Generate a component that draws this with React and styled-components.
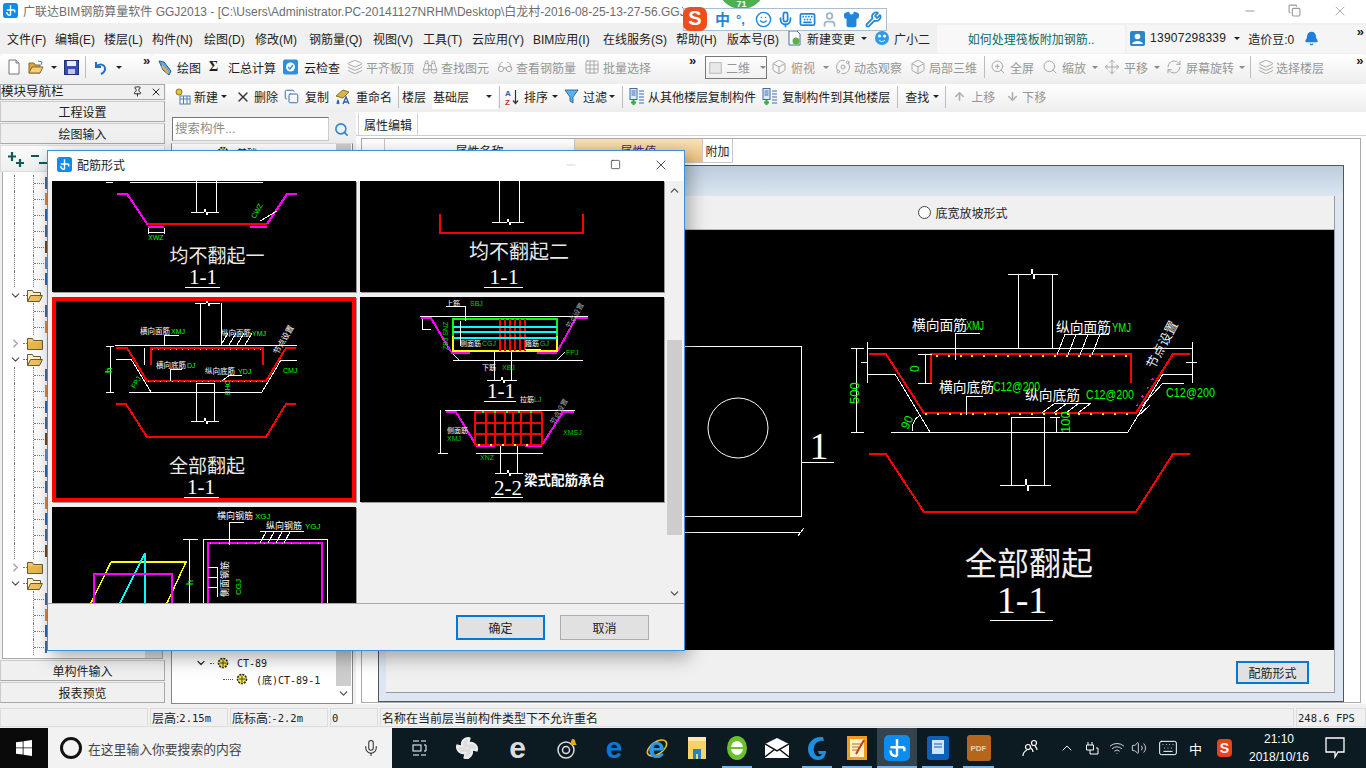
import styled, { createGlobalStyle } from 'styled-components'
import {
  ArrowDown, ArrowUp, Binoculars, Bell, Box, ChevronDown, ChevronUp, ChevronRight,
  Fan, Glasses, Grid3x3, Keyboard, Layers, Mic, Minus, Move, Orbit, Pin, RefreshCw, Search,
  Shirt, Smile, Square, User, Volume2, Wifi, Wrench, X, ZoomIn, Copy,
} from 'lucide-react'

const SANS = '"Liberation Sans", "Noto Sans CJK SC", sans-serif'
const SERIF = '"Liberation Serif", "Noto Sans CJK SC", serif'

const Global = createGlobalStyle`
  html, body { margin: 0; padding: 0; overflow: hidden; }
  body { font: 12px ${SANS}; color: #222; }
  * { box-sizing: border-box; }
`

/* ---------- small drawn icons ---------- */

const Logo = ({ size = 15 }) => (
  <svg width={size} height={size} viewBox="0 0 16 16">
    <rect width="16" height="16" rx="3" fill="#0a8cf0" />
    <path d="M8 2.500V13M4 7.500H12.500M8 13c-3 0-4-1.500-4-3.500M12.500 7.500v2.500" stroke="#fff" strokeWidth="1.500" fill="none" />
  </svg>
)
const Doc = () => (
  <svg width="14" height="16" viewBox="0 0 14 16">
    <path d="M2 1h7l3 3v11H2z" fill="#fff" stroke="#777" />
    <path d="M9 1v3h3" fill="#ddd" stroke="#777" />
  </svg>
)
const OpenFolder = () => (
  <svg width="16" height="15" viewBox="0 0 16 15">
    <path d="M1 3h5l1 2h5v8H1z" fill="#d9a441" stroke="#8a6a24" />
    <path d="M1 13l3-6h11l-3 6z" fill="#f4cf7c" stroke="#8a6a24" />
    <path d="M10 1l4 1-1 3" stroke="#3a7fc4" fill="none" />
  </svg>
)
const Floppy = () => (
  <svg width="15" height="15" viewBox="0 0 15 15">
    <rect x=".5" y=".5" width="14" height="14" fill="#3350b0" stroke="#1f2f70" />
    <rect x="3" y="1" width="9" height="5" fill="#e8eefb" />
    <rect x="4" y="9" width="7" height="5" fill="#c7c7d9" />
  </svg>
)
const Undo = () => (
  <svg width="14" height="15" viewBox="0 0 14 15">
    <path d="M3 2v5h5M3 7c3-4 9-3 9 2 0 2-2 4-4 5" stroke="#1f6fc4" strokeWidth="2" fill="none" />
  </svg>
)
const DrawIco = () => (
  <svg width="17" height="17" viewBox="0 0 17 17">
    <path d="M2 2l5 1 7 9-2 4-6-5z" fill="#6fa8dc" stroke="#27568c" />
    <path d="M5 7l6 7" stroke="#e8b23a" strokeWidth="2" />
  </svg>
)
const CloudCheck = () => (
  <svg width="15" height="16" viewBox="0 0 15 16">
    <rect y=".5" width="15" height="15" rx="2" fill="#2b8fdc" />
    <circle cx="7.500" cy="8" r="4.500" fill="#fff" />
    <path d="M5 8l2 2 3-4" stroke="#2b8fdc" strokeWidth="1.300" fill="none" />
  </svg>
)
const Sigma = () => <SigmaGlyph>Σ</SigmaGlyph>
const NewPart = () => (
  <svg width="17" height="17" viewBox="0 0 17 17">
    <circle cx="5" cy="4" r="3" fill="#e8c33a" stroke="#8a7420" />
    <rect x="6" y="8" width="10" height="8" fill="#fff" stroke="#4a7ab0" />
    <path d="M6 11h10M9.500 8v8M13 8v8" stroke="#4a7ab0" />
  </svg>
)
const CopyIco = () => <Copy size={15} color="#3c6ea8" strokeWidth={1.600} />
const Rename = () => (
  <svg width="18" height="17" viewBox="0 0 18 17">
    <path d="M1 8l7-6 6 2-6 6z" fill="#d9b44a" stroke="#8a7420" />
    <path d="M2 16l1-4 1 4M8 16l3-7 3 7M9 14h4" stroke="#2a5ea8" strokeWidth="1.300" fill="none" />
  </svg>
)
const Sort = () => (
  <svg width="16" height="18" viewBox="0 0 16 18">
    <text x="1" y="8" fontSize="8" fontWeight="700" fill="#2a5ea8">A</text>
    <text x="1" y="17" fontSize="8" fontWeight="700" fill="#b5392f">Z</text>
    <path d="M11.500 2v13M9 12.500l2.500 3 2.500-3" stroke="#333" strokeWidth="1.200" fill="none" />
  </svg>
)
const Funnel = () => (
  <svg width="15" height="15" viewBox="0 0 15 15">
    <path d="M1 1h13L9 8v6l-3-2V8z" fill="#5db1e8" stroke="#2a6ea8" />
  </svg>
)
const CopyIn = () => (
  <svg width="16" height="18" viewBox="0 0 16 18">
    <rect x="1" y=".5" width="7" height="11" fill="#dfe9f7" stroke="#3a6ea8" />
    <path d="M2.500 3h4M2.500 5h4M2.500 7h4" stroke="#3a6ea8" />
    <path d="M10 3h5M10 6h5M10 9h5M10 12h5M10 15h5" stroke="#3a6ea8" strokeWidth="1.200" />
    <path d="M4.500 12v5M2 14.500h5" stroke="#2aa84a" strokeWidth="2" />
  </svg>
)
const FolderClosed = () => (
  <svg width="16" height="13" viewBox="0 0 16 13">
    <path d="M.5 12.500v-11h5l1 2h9v9z" fill="#f2c964" stroke="#6e5a32" />
    <path d="M1 5h14v7H1z" fill="#e8b84c" />
  </svg>
)
const FolderOpen = () => (
  <svg width="16" height="13" viewBox="0 0 16 13">
    <path d="M.5 12.500v-11h5l1 2h7v3" fill="#fff4cf" stroke="#6e5a32" />
    <path d="M.5 12.500l3-6h12l-3 6z" fill="#f0c25c" stroke="#6e5a32" />
  </svg>
)
const Gear = () => (
  <svg width="12" height="12" viewBox="0 0 12 12">
    <circle cx="6" cy="6" r="4.500" fill="#f4ea3c" stroke="#222" strokeDasharray="2 1" strokeWidth="1.600" />
    <path d="M6 3v6M3 6h6" stroke="#444" />
  </svg>
)
const PlusPair = () => (
  <svg width="19" height="17" viewBox="0 0 19 17">
    <path d="M5 1v9M1 5.500h8M13 8v8M9 12h8" stroke="#0a5c5c" strokeWidth="2.200" />
  </svg>
)
const MinusPair = () => (
  <svg width="19" height="17" viewBox="0 0 19 17">
    <path d="M1 5h8M9 12h8" stroke="#0a5c5c" strokeWidth="2.200" />
  </svg>
)
const WinLogo = () => (
  <svg width="16" height="16" viewBox="0 0 16 16" fill="#fff">
    <path d="M0 2.300 6.700 1.400V7.500H0zM7.500 1.300 16 0V7.500H7.500zM0 8.300H6.700V14.600L0 13.700zM7.500 8.300H16V16L7.500 14.800z" />
  </svg>
)
const TaskView = () => (
  <svg width="15" height="16" viewBox="0 0 15 16" fill="none" stroke="#fff">
    <path d="M1 1h6M1 15h6M9 1h5M9 15h5" />
    <rect x="1" y="5" width="8" height="6" />
    <path d="M12 5h2v6h-2" />
  </svg>
)
const EdgeGlyph = ({ c }) => <BigE $c={c}>e</BigE>
const IeGlyph = () => (
  <IeWrap>
    <svg width="24" height="24" viewBox="0 0 24 24">
      <ellipse cx="12" cy="12" rx="11" ry="6" fill="none" stroke="#f0c020" strokeWidth="1.600" transform="rotate(-35 12 12)" />
    </svg>
    <BigE $c="#2a9ae8">e</BigE>
  </IeWrap>
)
const GSwirl = () => (
  <IeWrap>
    <svg width="24" height="24" viewBox="0 0 24 24" fill="none" stroke="#ddd" strokeWidth="1.500">
      <circle cx="10" cy="14" r="8" />
      <circle cx="10" cy="14" r="3.500" />
      <path d="M17 3c3 0 2 5 4 6h-7c2-1 0-6 3-6z" fill="#e8a820" stroke="none" />
    </svg>
  </IeWrap>
)
const Explorer = () => (
  <svg width="20" height="24" viewBox="0 0 20 24">
    <rect x="1" y="1" width="18" height="22" fill="#f6d365" />
    <rect x="1" y="1" width="18" height="4" fill="#ffeaa7" />
    <path d="M6 23V13h8v10h-3v-5H9v5z" fill="#2a80c8" />
  </svg>
)
const GreenE = () => (
  <svg width="22" height="26" viewBox="0 0 22 26">
    <ellipse cx="11" cy="13" rx="10" ry="12" fill="#6cc02c" />
    <ellipse cx="11" cy="13" rx="6" ry="7" fill="#fff" />
    <path d="M5 13h12" stroke="#6cc02c" strokeWidth="2" />
  </svg>
)
const Mail = () => (
  <svg width="24" height="20" viewBox="0 0 24 20">
    <path d="M0 6 12 0l12 6v14H0z" fill="#fff" />
    <path d="M0 6l12 7L24 6M0 19l10-8M24 19l-10-8" stroke="#111" strokeWidth="1.500" fill="none" />
  </svg>
)
const BlueG = () => (
  <svg width="22" height="26" viewBox="0 0 22 26">
    <path d="M17 2C7 1 2 8 2 14s4 11 10 11 8-5 8-9h-8l1 3h3c-1 2-3 3-5 2s-4-5-3-9 5-7 10-6z" fill="#1e8fe0" />
  </svg>
)
const Note = () => (
  <svg width="22" height="26" viewBox="0 0 22 26">
    <rect x="1" y="1" width="20" height="24" fill="#f39a1e" />
    <rect x="4" y="4" width="14" height="18" fill="#fff2c4" />
    <path d="M6 9h9M6 12h9M6 15h6" stroke="#b87414" />
    <path d="M10 19 18 5" stroke="#c0392b" strokeWidth="2" />
  </svg>
)
const BookBlue = () => (
  <svg width="24" height="26" viewBox="0 0 24 26">
    <rect x="1" y="1" width="22" height="24" rx="3" fill="#0e5fb8" />
    <rect x="6" y="5" width="12" height="14" fill="#cfe4fa" />
    <path d="M8 9h8M8 12h8" stroke="#0e5fb8" />
  </svg>
)
const PdfBox = () => <PdfMark>PDF</PdfMark>
const Bubble = () => (
  <svg width="20" height="22" viewBox="0 0 20 22" fill="none" stroke="#fff" strokeWidth="1.300">
    <path d="M1 1h18v14h-6l-3 5v-5H1z" />
  </svg>
)
const Ppl = () => (
  <svg width="18" height="18" viewBox="0 0 18 18" fill="none" stroke="#fff" strokeWidth="1.200">
    <circle cx="7" cy="8" r="2.500" />
    <circle cx="13" cy="4" r="2.500" />
    <path d="M2 17c0-3 2-5 4-6M10 9c1 1 2 3 2 4M14 7c1 1 2 2 2 4" />
  </svg>
)
const Battery = () => (
  <svg width="16" height="16" viewBox="0 0 16 16" fill="none" stroke="#fff">
    <path d="M4 2v3M8 2v3M2.500 5h7v5h-7zM6 10v4h8V8h-2" />
  </svg>
)
const ViewBox = () => (
  <svg width="17" height="17" viewBox="0 0 17 17" fill="#e8e8e8" stroke="#b0b0b0">
    <rect x="2" y="3" width="13" height="12" />
  </svg>
)
const GrayIco = ({ as: I }) => <I size={16} color="#a8a8a8" strokeWidth={1.500} />

/* ---------- CAD drawings ---------- */

const Cad = styled.svg`
  display: block;
  flex: none;
  shape-rendering: crispEdges;
  font-family: ${SANS};
`
const P = ({ d, c = '#fff', w = 1, dash }) => <path d={d} stroke={c} strokeWidth={w} strokeDasharray={dash} fill="none" />
const Tx = ({ x, y, s = 8, c = '#fff', r, a, f, b, tl, children }) => (
  <text
    x={x}
    y={y}
    fontSize={s}
    fill={c}
    textAnchor={a}
    fontFamily={f}
    fontWeight={b}
    textLength={tl}
    lengthAdjust={tl ? 'spacingAndGlyphs' : undefined}
    transform={r ? `rotate(${r} ${x} ${y})` : undefined}
  >
    {children}
  </text>
)
const zig = (a, m, b, y, h = 5) => `M${a} ${y}H${m - 1}l1 ${-h}l2 ${h * 2}l1 ${-h}H${b}`

const ThumbOne = () => (
  <Cad width="304" height="111" viewBox="0 0 304 111">
    <P d="M78 1H211M54 1H61M144 0V31M164 0V31" />
    <P d={zig(139, 153, 167, 31, 3)} />
    <P d="M65 13H75L96 44" c="#f0f" w={2} />
    <P d="M96 43H215" c="#f00" w={2} />
    <P d="M215 43L235 13H245" c="#f0f" w={2} />
    <P d="M96 46H112M198 46H215" c="#f0f" w={2} />
    <P d="M96 47V53M112 47V53M96 51H112M208 40L225 30" />
    <Tx x="96" y="59" s={7} c="#0f0">XWZ</Tx>
    <Tx x="203" y="38" s={7} c="#0f0" r={-60}>CWZ</Tx>
    <Tx x="165" y="82" s={19} a="middle" c="#e8e8e8">均不翻起一</Tx>
    <Tx x="151" y="103" s={21} a="middle" f={SERIF}>1-1</Tx>
    <P d="M133 106H168" />
  </Cad>
)
const ThumbTwo = () => (
  <Cad width="304" height="111" viewBox="0 0 304 111">
    <P d="M139 0V41M159 0V41" />
    <P d={zig(132, 148, 164, 41, 3)} />
    <P d="M80 33V52H223V33" c="#f00" w={2} />
    <Tx x="159" y="78" s={20} a="middle" c="#e8e8e8">均不翻起二</Tx>
    <Tx x="144" y="103" s={22} a="middle" f={SERIF}>1-1</Tx>
    <P d="M124 106H163" />
  </Cad>
)
const ThumbFull = () => (
  <Cad width="304" height="205" viewBox="0 0 304 205">
    <P d="M148 6V48M169 6V48M63 48H245M77 95H210M64 62H79L99 95M210 95L229 63H245" />
    <P d={zig(143, 155, 168, 6, 3)} />
    <P d="M64 51H75L95 84H214L234 51H244" c="#f00" w={2} />
    <P d="M99 68V51H211V68" c="#f00" w={2} />
    <P d="M100 52H210M96 84H213" c="#ff0" dash="1 5" />
    <P d="M144 86V124M162 86V124M144 86H162M58 49V95M54 49H62M54 95H62M92 62V68M92 51V68" />
    <P d={zig(139, 153, 167, 124, 3)} />
    <P d="M112 49V38H127M169 48L176 36M177 48L184 36M185 48L192 36M193 48L200 36M118 84V72H130M170 84L178 78H190" />
    <P d="M64 107H74L95 140H214L234 107H244" c="#f00" w={2} />
    <Tx x="88" y="37" s={7.500}>横向面筋</Tx>
    <Tx x="119" y="37" s={7} c="#0f0">XMJ</Tx>
    <Tx x="169" y="39" s={7.500}>纵向面筋</Tx>
    <Tx x="200" y="39" s={7} c="#0f0">YMJ</Tx>
    <Tx x="104" y="71" s={7.500}>横向底筋</Tx>
    <Tx x="135" y="71" s={7} c="#0f0">DJ</Tx>
    <Tx x="153" y="77" s={7.500}>纵向底筋</Tx>
    <Tx x="186" y="77" s={7} c="#0f0">YDJ</Tx>
    <Tx x="231" y="76" s={7} c="#0f0">CMJ</Tx>
    <Tx x="60" y="76" s={9} c="#0f0" r={-90} b={700}>h</Tx>
    <Tx x="83" y="92" s={7} c="#0f0" r={-60}>FPJ</Tx>
    <Tx x="178" y="98" s={7} c="#0f0" r={-90}>BHC</Tx>
    <Tx x="226" y="58" s={8} r={-60}>节点设置</Tx>
    <Tx x="155" y="176" s={19} a="middle" c="#e8e8e8">全部翻起</Tx>
    <Tx x="149" y="197" s={21} a="middle" f={SERIF}>1-1</Tx>
    <P d="M132 200H167" />
  </Cad>
)
const gridX = [115, 126, 135, 145, 153, 161, 171, 182]
const ThumbBeam = () => (
  <Cad width="304" height="205" viewBox="0 0 304 205">
    <P d="M60 19H228M93 63H223M91 55L99 63M197 63L205 55M134 55V83M151 55V83M62 19V33M62 32H71" />
    <P d="M61 21H71L91 55M197 55L216 21H228" c="#f0f" w={2} />
    <P d="M91 56H110M177 56H197" c="#f0f" w={2} />
    <P d="M93 39V22H197V39" c="#0f0" w={2} />
    <P d="M93 39V54H197V39" c="#ff0" w={2} />
    <P d="M140 22V54M145 22V54M150 22V54M155 22V54M160 22V54M165 22V54" c="#f00" w={2} />
    <P d="M93 30H197M93 35H197M93 41H197" c="#0ff" w={2} />
    <P d={zig(127, 142, 157, 83, 3)} />
    <P d="M105 9H86M105 9V24M100 49V24M165 52H181" />
    <Tx x="86" y="9" s={7}>上筋</Tx><Tx x="110" y="9" s={7} c="#0c0">SBJ</Tx>
    <Tx x="100" y="49" s={7}>侧面筋</Tx><Tx x="122" y="49" s={7} c="#0c0">CGJ</Tx>
    <Tx x="165" y="49" s={7}>箍筋</Tx><Tx x="180" y="49" s={7} c="#0c0">GJ</Tx>
    <Tx x="122" y="73" s={7}>下筋</Tx><Tx x="142" y="73" s={7} c="#0c0">XBJ</Tx>
    <Tx x="206" y="58" s={7} c="#0c0">FPJ</Tx>
    <Tx x="88" y="53" s={7} c="#0c0" r={-90}>ZBJ SNZ</Tx>
    <Tx x="210" y="32" s={7} c="#aaa" r={-60}>节点设置</Tx>
    <Tx x="141" y="101" s={21} a="middle" f={SERIF}>1-1</Tx>
    <P d="M124 104H156" />
    <P d="M85 113H215M80 113V156M78 156H88M116 156H183M140 149V176M157 149V176" />
    <P d={zig(135, 148, 163, 176, 3)} />
    <P d="M86 115H96L116 148M182 148L203 115H214M116 149H135M165 149H182" c="#f0f" w={2} />
    <P d={`M115 115V148M182 115V148M115 115H182M115 126H182M115 137H182M115 148H182${gridX.map(x => `M${x} 115V148`).join('')}`} c="#f00" w={2} />
    <P d="M122 115H175" c="#0f0" dash="2 10" w={2} />
    <P d="M118 148H176" c="#ff0" dash="2 10" w={2} />
    <Tx x="160" y="105" s={7}>拉筋</Tx><Tx x="174" y="105" s={7} c="#0c0">LJ</Tx>
    <Tx x="87" y="136" s={7}>侧面筋</Tx><Tx x="87" y="144" s={7} c="#0c0">XMJ</Tx>
    <Tx x="203" y="138" s={7} c="#0c0">XMSJ</Tx>
    <Tx x="120" y="163" s={7} c="#0c0">XNZ</Tx>
    <Tx x="194" y="128" s={7} c="#aaa" r={-60}>节点设置</Tx>
    <Tx x="148" y="198" s={21} a="middle" f={SERIF}>2-2</Tx>
    <P d="M131 200H163" />
    <Tx x="164" y="188" s={13.500} b={700}>梁式配筋承台</Tx>
  </Cad>
)
const ThumbStair = () => (
  <Cad width="304" height="96" viewBox="0 0 304 96">
    <P d="M137 32V96M131 32H146M151 96V32H275V96" />
    <P d="M59 55H134L115 96M59 55L39 96" c="#ff0" w={1.500} />
    <P d="M93 46L68 96M93 46V96" c="#0ff" w={1.500} />
    <P d="M42 96V67H120V96" c="#f0f" w={2} />
    <P d="M156 96V36H270V96" c="#f0f" w={2} />
    <P d="M158 36H268" c="#ff0" dash="1 8" />
    <P d="M177 38V15H192M208 36L214 25M216 36L222 25M224 36L230 25M232 36L238 25M208 24H252M156 60H165M156 70H165M156 80H165M165 60V90" />
    <Tx x="165" y="12" s={9}>横向钢筋</Tx><Tx x="203" y="12" s={8} c="#0f0">XGJ</Tx>
    <Tx x="214" y="22" s={9}>纵向钢筋</Tx><Tx x="253" y="22" s={8} c="#0f0">YGJ</Tx>
    <Tx x="176" y="90" s={9} r={-90}>侧面钢筋</Tx>
    <Tx x="189" y="88" s={8} c="#0f0" r={-90}>CGJ</Tx>
    <Tx x="141" y="78" s={9} c="#0f0" r={-90}>h</Tx>
  </Cad>
)
const BigDrawing = () => (
  <Cad width="950" height="420" viewBox="386 230 950 420">
    {/* plan view, its left part sits behind the dialog */}
    <P d="M600 346H801V516H600" />
    <circle cx="738" cy="428" r="30" fill="none" stroke="#fff" style={{ shapeRendering: 'auto' }} />
    <P d="M802 462H834M600 532H801M798 536L804 528" />
    <Tx x="819" y="459" s={38} a="middle" f={SERIF}>1</Tx>

    {/* section */}
    <P d="M867 348H1192M1018 274V348M1052 274V348M891 432H1128M867 342V383M1192 342V383" />
    <P d={zig(1008, 1032, 1058, 274, 5)} />
    <P d="M867 374H895L930 432M1128 432L1163 374H1192M861 362H868M1186 362H1197" />
    <P d="M869 354H886L924 413H1136L1173 354H1190" c="#f00" w={2} />
    <P d="M931 383V354H1131V383" c="#f00" w={2} />
    <P d="M936 356H1128M925 414H1130" c="#ff0" dash="2 9.800" w={2} />
    <P d="M856 348V432M851 348H864M851 432H864M925 354V383M918 354H932M918 383H932" />
    <P d="M1011 417V485M1044 417V485M1011 417H1044M1056 417V432M1050 417H1060" />
    <P d={zig(1000, 1026, 1051, 485, 6)} />
    <P d="M955 360V333H980M966 415V396H983M1065 334H1109M1065 334L1057 355M1076 334L1068 355M1088 334L1080 355M1100 334L1092 355" />
    <P d="M1055 403H1090M1042 413L1055 403M1054 413L1067 403M1066 413L1079 403M1078 413L1091 403" />
    <P d="M1142 406L1163 383H1184M1136 418L1150 405" />
    <path d="M912 432a19 19 0 0 1 8 -17" fill="none" stroke="#fff" />
    <P d="M869 454H886L924 512H1136L1173 454H1190" c="#f00" w={2} />
    <P d="M1137 406L1155 375" c="#f0f" dash="2 8" w={2} />

    <Tx x="912" y="330" s={13.750}>横向面筋</Tx>
    <Tx x="966" y="330" s={13} c="#0f0" tl={18}>XMJ</Tx>
    <Tx x="1056" y="332" s={13.750}>纵向面筋</Tx>
    <Tx x="1112" y="332" s={13} c="#0f0" tl={19}>YMJ</Tx>
    <Tx x="939" y="392" s={13.750}>横向底筋</Tx>
    <Tx x="993" y="391" s={13} c="#0f0" tl={47}>C12@200</Tx>
    <Tx x="1025" y="400" s={13.750}>纵向底筋</Tx>
    <Tx x="1086" y="399" s={13} c="#0f0" tl={48}>C12@200</Tx>
    <Tx x="1166" y="397" s={13} c="#0f0" tl={49}>C12@200</Tx>
    <Tx x="859" y="404" s={13} c="#0f0" r={-90}>500</Tx>
    <Tx x="919" y="372" s={12} c="#0f0" r={-90}>0</Tx>
    <Tx x="1070" y="433" s={13} c="#0f0" r={-90}>100</Tx>
    <Tx x="908" y="430" s={12} c="#0f0" r={-65}>90</Tx>
    <Tx x="1154" y="370" s={13} c="#eee" r={-62}>节点设置</Tx>
    <Tx x="1029" y="575" s={32} a="middle" c="#eee">全部翻起</Tx>
    <Tx x="1022" y="613" s={38} a="middle" f={SERIF}>1-1</Tx>
    <P d="M990 620H1053" />
  </Cad>
)

/* ---------- data ---------- */

const MENUS = [
  ['文件(F)', 48], ['编辑(E)', 49], ['楼层(L)', 48], ['构件(N)', 52], ['绘图(D)', 51], ['修改(M)', 54],
  ['钢筋量(Q)', 64], ['视图(V)', 50], ['工具(T)', 49], ['云应用(Y)', 61], ['BIM应用(I)', 70],
  ['在线服务(S)', 73], ['帮助(H)', 51], ['版本号(B)', 61],
]

const BAND_B = [
  { ml: 5, w: 20, icon: <DrawIco />, text: '绘图' },
  { ml: 8, w: 19, icon: <Sigma />, text: '汇总计算' },
  { ml: 7, w: 21, icon: <CloudCheck />, text: '云检查' },
  { ml: 7, w: 19, icon: <GrayIco as={Layers} />, text: '平齐板顶', off: true },
  { ml: 8, w: 19, icon: <GrayIco as={Binoculars} />, text: '查找图元', off: true },
  { ml: 8, w: 19, icon: <GrayIco as={Glasses} />, text: '查看钢筋量', off: true },
  { ml: 8, w: 19, icon: <GrayIco as={Grid3x3} />, text: '批量选择', off: true },
]
const BAND_C = [
  { ml: 4, w: 20, icon: <GrayIco as={Box} />, text: '俯视', off: true, caret: 8 },
  { ml: 6, w: 19, icon: <GrayIco as={Orbit} />, text: '动态观察', off: true },
  { ml: 8, w: 19, icon: <GrayIco as={Box} />, text: '局部三维', off: true },
  { sep: 7 },
  { ml: 5, w: 20, icon: <GrayIco as={ZoomIn} />, text: '全屏', off: true },
  { ml: 8, w: 20, icon: <GrayIco as={Search} />, text: '缩放', off: true, caret: 6 },
  { ml: 6, w: 20, icon: <GrayIco as={Move} />, text: '平移', off: true, caret: 6 },
  { ml: 6, w: 20, icon: <GrayIco as={RefreshCw} />, text: '屏幕旋转', off: true, caret: 5 },
  { sep: 5 },
  { ml: 7, w: 18, icon: <GrayIco as={Layers} />, text: '选择楼层', off: true },
]
const SUB_LEFT = [
  { ml: 8, w: 20, icon: <NewPart />, text: '新建', caret: 3 },
  { ml: 8, w: 19, icon: <X size={16} color="#333" strokeWidth={2} />, text: '删除' },
  { ml: 6, w: 21, icon: <CopyIco />, text: '复制' },
  { ml: 6, w: 21, icon: <Rename />, text: '重命名' },
  { sep: 6 },
  { ml: 3, w: 0, text: '楼层' },
]
const SUB_RIGHT = [
  { sep: 1 },
  { ml: 4, w: 20, icon: <Sort />, text: '排序', caret: 4 },
  { ml: 6, w: 19, icon: <Funnel />, text: '过滤', caret: 2 },
  { sep: 7 },
  { ml: 6, w: 19, icon: <CopyIn />, text: '从其他楼层复制构件' },
  { ml: 6, w: 20, icon: <CopyIn />, text: '复制构件到其他楼层' },
  { sep: 7 },
  { ml: 7, w: 0, text: '查找', caret: 4 },
  { sep: 6 },
  { ml: 7, w: 18, icon: <ArrowUp size={13} color="#b0b0b0" strokeWidth={3} />, text: '上移', off: true },
  { ml: 11, w: 16, icon: <ArrowDown size={13} color="#b0b0b0" strokeWidth={3} />, text: '下移', off: true },
]

const LEAF_COLORS = ['#3c6ea8', '#d98a4a', '#1f6fc4', '#3c6ea8', '#6e4a2a', '#5a8fd0', '#1f6fc4']
const leaves = (n, key) =>
  Array.from({ length: n }, (_, i) => ({ kind: 'leaf', id: `${key}${i}`, color: LEAF_COLORS[i % LEAF_COLORS.length] }))
const NAV_TREE = [
  ...leaves(7, 'a'),
  { kind: 'open', id: 'f1' },
  ...leaves(2, 'b').map(r => ({ ...r, trunk: false })),
  { kind: 'closed', id: 'f2' },
  { kind: 'open', id: 'f3' },
  ...leaves(12, 'c'),
  { kind: 'closed', id: 'f4' },
  { kind: 'open', id: 'f5' },
  ...leaves(4, 'd').map(r => ({ ...r, trunk: false })),
]

const TASK_ICONS = [
  { id: 'view', w: 44, node: <TaskView /> },
  { id: 'fan', w: 51, node: <Fan size={24} color="#eee" fill="#ddd" /> },
  { id: 'ie0', w: 51, node: <EdgeGlyph c="#ddd" /> },
  { id: 'swirl', w: 49, node: <GSwirl /> },
  { id: 'edge', w: 44, node: <EdgeGlyph c="#0a78d7" /> },
  { id: 'ie', w: 41, node: <IeGlyph /> },
  { id: 'exp', w: 40, node: <Explorer /> },
  { id: 'green', w: 40, node: <GreenE />, on: true },
  { id: 'mail', w: 40, node: <Mail /> },
  { id: 'g', w: 40, node: <BlueG />, on: true },
  { id: 'note', w: 40, node: <Note />, on: true },
  { id: 'app', w: 40, node: <Logo size={26} />, on: true, active: true },
  { id: 'book', w: 41, node: <BookBlue />, on: true },
  { id: 'pdf', w: 41, node: <PdfBox />, on: true },
]

/* ---------- page ---------- */

function ToolRun({ items }) {
  return items.map((it, i) =>
    it.sep ? (
      <Sep key={i} $ml={it.sep} />
    ) : (
      <Tool key={i} $ml={it.ml} $off={it.off}>
        {it.icon && <IconSlot $w={it.w}>{it.icon}</IconSlot>}
        {it.text}
        {it.caret && <Caret $ml={it.caret} $off={it.off} />}
      </Tool>
    )
  )
}

function TreeRow({ row }) {
  const folder = row.kind !== 'leaf'
  return (
    <NavRow>
      <Trunk $on={!folder && row.trunk !== false} />
      {folder ? (
        <>
          <Toggle>
            {row.kind === 'open' ? <ChevronDown size={13} color="#444" strokeWidth={2} /> : <ChevronRight size={13} color="#aaa" strokeWidth={3} />}
          </Toggle>
          <Dash $w={4} />
          {row.kind === 'open' ? <FolderOpen /> : <FolderClosed />}
        </>
      ) : (
        <>
          <Branch />
          <Dash $w={10} />
          <LeafMark $c={row.color} />
        </>
      )}
    </NavRow>
  )
}

export default function App() {
  return (
    <Page>
      <Global />
      <TitleBar>
        <Logo />
        <TitleText>广联达BIM钢筋算量软件 GGJ2013 - [C:\Users\Administrator.PC-20141127NRHM\Desktop\白龙村-2016-08-25-13-27-56.GGJ12]</TitleText>
        <WinButtons>
          <Minus size={14} color="#999" />
          <Copy size={13} color="#999" />
          <X size={16} color="#999" strokeWidth={1.200} />
        </WinButtons>
      </TitleBar>

      <MenuBar>
        {MENUS.map(([m, w]) => <MenuItem key={m} $w={w}>{m}</MenuItem>)}
        <MenuExtra>
          <IconSlot $w={19}>
            <svg width="14" height="16" viewBox="0 0 14 16">
              <path d="M1 1h8l3 3v11H1z" fill="#fff" stroke="#3c6ea8" />
              <circle cx="8" cy="11" r="3.500" fill="#5db13a" />
            </svg>
          </IconSlot>
          新建变更
          <Caret $ml={6} />
        </MenuExtra>
        <MenuExtra $ml={7}>
          <IconSlot $w={20}>
            <svg width="16" height="16" viewBox="0 0 16 16">
              <circle cx="8" cy="8" r="7" fill="#2f9ae8" />
              <circle cx="5.500" cy="6" r="1.500" fill="#fff" />
              <circle cx="10.500" cy="6" r="1.500" fill="#fff" />
              <path d="M5 10c2 2 4 2 6 0" stroke="#fff" fill="none" />
            </svg>
          </IconSlot>
          广小二
        </MenuExtra>
        <TipTab>如何处理筏板附加钢筋..</TipTab>
        <Account>
          <IconSlot $w={20}>
            <svg width="15" height="15" viewBox="0 0 15 15">
              <rect width="15" height="15" rx="2" fill="#2a86c8" />
              <circle cx="7.500" cy="5.500" r="2.800" fill="#fff" />
              <path d="M2 13c1-4 10-4 11 0z" fill="#fff" />
            </svg>
          </IconSlot>
          <Phone>13907298339</Phone>
          <Caret $ml={8} />
          <AccountGap>造价豆:0</AccountGap>
          <BellSlot><Bell size={15} color="#1f7fe0" fill="#1f7fe0" /></BellSlot>
          <Chevrons>»</Chevrons>
        </Account>
      </MenuBar>

      <MainToolbar>
        <Band $w={152}>
          <Tool $ml={7}><IconSlot $w={16}><Doc /></IconSlot></Tool>
          <Tool $ml={5}><IconSlot $w={16}><OpenFolder /></IconSlot><Caret $ml={7} /></Tool>
          <Tool $ml={7}><IconSlot $w={16}><Floppy /></IconSlot></Tool>
          <Sep $ml={5} />
          <Tool $ml={7}><IconSlot $w={16}><Undo /></IconSlot><Caret $ml={7} /></Tool>
          <Chevrons $ml={21}>»</Chevrons>
        </Band>
        <Band $w={548}>
          <ToolRun items={BAND_B} />
          <Chevrons $ml={38}>»</Chevrons>
        </Band>
        <Band>
          <ViewSelect><ViewBox />二维<Caret $ml={7} $off /></ViewSelect>
          <ToolRun items={BAND_C} />
          <Chevrons $ml={32}>»</Chevrons>
        </Band>
      </MainToolbar>

      <Workspace>
        <NavPanel>
          <NavHeader>
            模块导航栏
            <NavHeaderIcons><Pin size={11} color="#222" /><X size={12} color="#222" /></NavHeaderIcons>
          </NavHeader>
          <NavButton>工程设置</NavButton>
          <NavButton>绘图输入</NavButton>
          <TreeBar><PlusPair /><MinusPair /></TreeBar>
          <NavTree>
            <NavRows>{NAV_TREE.map(r => <TreeRow key={r.id} row={r} />)}</NavRows>
            <NavScroll><NavScrollEnd /></NavScroll>
          </NavTree>
          <NavButton $top>单构件输入</NavButton>
          <NavButton>报表预览</NavButton>
        </NavPanel>

        <Editor>
          <SubToolbar>
            <ToolRun items={SUB_LEFT} />
            <FloorSelect>基础层<Caret /></FloorSelect>
            <ToolRun items={SUB_RIGHT} />
          </SubToolbar>
          <EditorBody>
            <ListColumn>
              <SearchRow>
                <SearchBox>搜索构件...</SearchBox>
                <SearchBtn><Search size={15} color="#2a86d8" strokeWidth={2.500} /></SearchBtn>
              </SearchRow>
              <ListFrame>
                <ListRows>
                  <ListRow $in={45}><Gear /><RowName>基础</RowName></ListRow>
                  <ListSpring />
                  <ListRow $in={23}>
                    <ChevronDown size={12} color="#333" strokeWidth={2.500} />
                    <RowDash />
                    <Gear />
                    <RowName>CT-89</RowName>
                  </ListRow>
                  <ListRow $in={51}>
                    <RowDash $w={10} />
                    <Gear />
                    <RowName>(底)CT-89-1</RowName>
                  </ListRow>
                </ListRows>
                <ListScroll>
                  <ScrollTrack $h={542} />
                  <ChevronDown size={13} color="#555" strokeWidth={2.500} />
                </ListScroll>
              </ListFrame>
            </ListColumn>
            <PropertyPanel>
              <TabStrip><Tab>属性编辑</Tab></TabStrip>
              <PropTable>
                <PropHead>
                  <PropCell $w={23} />
                  <PropCell $w={190}>属性名称</PropCell>
                  <PropCell $w={128} $on>属性值</PropCell>
                  <PropCell $w={30}>附加</PropCell>
                </PropHead>
              </PropTable>
            </PropertyPanel>
          </EditorBody>
        </Editor>
      </Workspace>

      <StatusBar>
        <StatusCell $w={148} />
        <StatusCell $w={78}>层高:<Mono>2.15m</Mono></StatusCell>
        <StatusCell $w={98}>底标高:<Mono>-2.2m</Mono></StatusCell>
        <StatusCell $w={48}><Mono>0</Mono></StatusCell>
        <StatusCell $grow>名称在当前层当前构件类型下不允许重名</StatusCell>
        <StatusCell $w={70}><Mono>248.6 FPS</Mono></StatusCell>
      </StatusBar>

      <Taskbar>
        <StartButton><WinLogo /></StartButton>
        <TaskSearch>
          <Ring />
          <SearchHint>在这里输入你要搜索的内容</SearchHint>
          <Mic size={18} color="#333" strokeWidth={1.400} />
        </TaskSearch>
        <TaskIcons>
          {TASK_ICONS.map(t => <TaskSlot key={t.id} $w={t.w} $on={t.on} $active={t.active}>{t.node}</TaskSlot>)}
        </TaskIcons>
        <Tray>
          <TraySlot $ml={22}><Ppl /></TraySlot>
          <TraySlot $ml={20}><ChevronUp size={16} color="#fff" strokeWidth={1.400} /></TraySlot>
          <TraySlot $ml={9}><Battery /></TraySlot>
          <TraySlot $ml={9}><Wifi size={16} color="#ddd" strokeWidth={1.400} /></TraySlot>
          <TraySlot $ml={6}><Volume2 size={16} color="#ddd" strokeWidth={1.400} /></TraySlot>
          <TraySlot $ml={11}><Keyboard size={20} color="#fff" strokeWidth={1.200} /></TraySlot>
          <TraySlot $ml={11}><TrayText>中</TrayText></TraySlot>
          <TraySlot $ml={15}><SogouTray>S</SogouTray></TraySlot>
          <TraySlot $ml={15}><Clock><span>21:10</span><span>2018/10/16</span></Clock></TraySlot>
          <TraySlot $ml={14}><Bubble /></TraySlot>
        </Tray>
      </Taskbar>

      <ConfigWindow>
        <ConfigTitle />
        <ConfigClient>
          <RadioRow><Radio />底宽放坡形式</RadioRow>
          <BlackPane><BigDrawing /></BlackPane>
          <ConfigFooter><FocusButton>配筋形式</FocusButton></ConfigFooter>
        </ConfigClient>
      </ConfigWindow>

      <Dialog>
        <DialogTitle>
          <Logo />
          <DialogName>配筋形式</DialogName>
          <DialogButtons>
            <Minus size={14} color="#bbb" strokeWidth={1} />
            <Square size={11} color="#222" strokeWidth={1.500} />
            <X size={16} color="#222" strokeWidth={1.200} />
          </DialogButtons>
        </DialogTitle>
        <DialogBody>
          <ThumbGrid>
            <Thumb><ThumbOne /></Thumb>
            <Thumb><ThumbTwo /></Thumb>
            <Thumb $picked><ThumbFull /></Thumb>
            <Thumb><ThumbBeam /></Thumb>
            <Thumb><ThumbStair /></Thumb>
          </ThumbGrid>
          <DialogScroll>
            <ChevronUp size={13} color="#555" strokeWidth={2.500} />
            <ScrollTrack $h={195} $top={143} />
            <ChevronDown size={13} color="#555" strokeWidth={2.500} />
          </DialogScroll>
        </DialogBody>
        <DialogFooter>
          <DialogButton $primary>确定</DialogButton>
          <DialogButton>取消</DialogButton>
        </DialogFooter>
      </Dialog>

      <ScoreBadge>71</ScoreBadge>
      <ImeBar>
        <ImeLogo>S</ImeLogo>
        <ImeWord>中</ImeWord>
        <ImeWord $s={13}>°,</ImeWord>
        <Smile size={17} color="#1f86dc" strokeWidth={2} />
        <Mic size={17} color="#1f86dc" strokeWidth={2.500} />
        <Keyboard size={17} color="#1f86dc" strokeWidth={2.500} />
        <User size={17} color="#9db6c9" strokeWidth={2.500} />
        <Shirt size={17} color="#1f86dc" fill="#1f86dc" />
        <Wrench size={17} color="#1f86dc" strokeWidth={2.500} />
      </ImeBar>
    </Page>
  )
}

/* ---------- styles ---------- */

const Page = styled.div`
  position: relative;
  display: flex;
  flex-direction: column;
  width: 1366px;
  height: 768px;
  overflow: hidden;
  background: #f0f0f0;
`
const TitleBar = styled.header`
  display: flex;
  align-items: center;
  height: 23px;
  padding: 0 0 2px 3px;
  background: #fff;
`
const TitleText = styled.span`
  flex: 0 0 660px;
  margin-left: 5px;
  overflow: hidden;
  white-space: nowrap;
  color: #6d6d6d;
`
const WinButtons = styled.div`
  display: flex;
  align-items: center;
  gap: 31px;
  margin-left: auto;
  padding-right: 18px;
`
const MenuBar = styled.nav`
  display: flex;
  align-items: center;
  height: 31px;
  padding-left: 7px;
  background: #f0f0f0;
`
const MenuItem = styled.span`
  flex: 0 0 ${p => p.$w}px;
  padding-bottom: 1px;
  white-space: nowrap;
`
const MenuExtra = styled.span`
  display: inline-flex;
  align-items: center;
  margin-left: ${p => p.$ml || 0}px;
  padding-bottom: 1px;
  white-space: nowrap;
`
const IconSlot = styled.span`
  display: inline-flex;
  align-items: center;
  flex: none;
  width: ${p => p.$w}px;
`
const Caret = styled.i`
  display: inline-block;
  flex: none;
  margin-left: ${p => p.$ml || 0}px;
  border: 3px solid transparent;
  border-top: 3px solid ${p => (p.$off ? '#888' : '#222')};
  border-bottom: 0;
  width: 0;
  height: 0;
`
const TipTab = styled.div`
  display: flex;
  align-items: center;
  justify-content: center;
  flex: 0 0 188px;
  height: 28px;
  margin-left: 7px;
  padding-bottom: 1px;
  border-radius: 3px;
  background: #f8f8f8;
  color: #0c6a6a;
`
const Account = styled.div`
  display: flex;
  align-items: center;
  flex: 1;
  height: 28px;
  margin-left: 2px;
  padding: 0 0 1px 3px;
  background: #f5f5f5;
`
const Phone = styled.span`
  letter-spacing: 0.25px;
`
const AccountGap = styled.span`
  margin-left: 8px;
`
const BellSlot = styled.span`
  display: flex;
  margin-left: 10px;
`
const Chevrons = styled.span`
  margin-left: ${p => (p.$ml === undefined ? 'auto' : `${p.$ml}px`)};
  padding-right: ${p => (p.$ml === undefined ? '2px' : '0')};
  align-self: flex-start;
  font: 700 13px/13px ${SANS};
  color: #222;
`
const MainToolbar = styled.div`
  display: flex;
  height: 30px;
`
const Band = styled.div`
  display: flex;
  align-items: center;
  flex: ${p => (p.$w ? `0 0 ${p.$w}px` : '1')};
  padding-bottom: 4px;
  border-radius: 3px;
  background: linear-gradient(#fff, #ededed);
`
const Tool = styled.span`
  display: inline-flex;
  align-items: center;
  flex: none;
  margin-left: ${p => p.$ml}px;
  white-space: nowrap;
  color: ${p => (p.$off ? '#969696' : '#1c1c1c')};
`
const Sep = styled.i`
  flex: none;
  width: 1px;
  height: 22px;
  margin-left: ${p => p.$ml}px;
  background: #bcbcbc;
`
const ViewSelect = styled.span`
  display: inline-flex;
  align-items: center;
  gap: 3px;
  flex: none;
  width: 62px;
  height: 23px;
  margin-left: 5px;
  padding-left: 2px;
  border: 1px solid #777;
  color: #969696;
  white-space: nowrap;
`
const SigmaGlyph = styled.b`
  font: 700 14px "Liberation Serif", serif;
`
const Workspace = styled.div`
  display: flex;
  flex: 1;
  min-height: 0;
`
const NavPanel = styled.aside`
  display: flex;
  flex-direction: column;
  flex: 0 0 166px;
  padding-right: 1px;
  padding-bottom: 3px;
`
const NavHeader = styled.div`
  display: flex;
  align-items: center;
  justify-content: space-between;
  height: 16px;
  margin-bottom: 1px;
  border: 1px solid #aaa;
  font-size: 12.500px;
  line-height: 14px;
`
const NavHeaderIcons = styled.span`
  display: flex;
  gap: 7px;
  padding-right: 2px;
`
const NavButton = styled.div`
  display: flex;
  align-items: center;
  justify-content: center;
  flex: none;
  height: 21px;
  margin-bottom: 1px;
  margin-top: ${p => (p.$top ? '1px' : '0')};
  border: 1px solid #ccc;
  border-bottom-color: #a8a8a8;
  border-right-color: #a8a8a8;
  background: #f0f0f0;
`
const TreeBar = styled.div`
  display: flex;
  gap: 4px;
  flex: none;
  height: 27px;
  padding: 5px 0 0 6px;
  border: 1px solid #ddd;
  background: linear-gradient(#fbfbfb, #eee);
`
const NavTree = styled.div`
  display: flex;
  flex: 1;
  min-height: 0;
  margin: 0 2px;
  overflow: hidden;
  background: #fff;
  border: 1px solid #aaa;
  border-top: 0;
`
const NavRows = styled.div`
  flex: 1;
  padding-top: 3px;
  overflow: hidden;
`
const NavScroll = styled.div`
  display: flex;
  align-items: flex-end;
  flex: 0 0 17px;
`
const NavScrollEnd = styled.i`
  flex: 1;
  height: 9px;
  background: #dedede;
`
const NavRow = styled.div`
  display: flex;
  align-items: center;
  height: 16px;
`
const Trunk = styled.span`
  flex: none;
  align-self: stretch;
  width: 12px;
  border-right: 1px ${p => (p.$on ? 'dotted #777' : 'none')};
`
const Branch = styled.span`
  flex: none;
  align-self: stretch;
  width: 19px;
  border-right: 1px dotted #777;
`
const Toggle = styled.span`
  display: flex;
  flex: none;
  width: 14px;
  margin-left: -6px;
`
const Dash = styled.i`
  flex: none;
  width: ${p => p.$w}px;
  border-top: 1px dotted #777;
`
const LeafMark = styled.i`
  flex: none;
  width: 14px;
  height: 12px;
  border-left: 2px solid ${p => p.$c};
  margin-left: 1px;
`
const Editor = styled.main`
  display: flex;
  flex-direction: column;
  flex: 1;
  min-width: 0;
`
const SubToolbar = styled.div`
  display: flex;
  align-items: center;
  flex: none;
  height: 28px;
  padding-bottom: 3px;
  background: linear-gradient(#fff, #ededed);
`
const FloorSelect = styled.span`
  display: inline-flex;
  align-items: center;
  justify-content: space-between;
  flex: none;
  width: 66px;
  height: 24px;
  margin-left: 6px;
  padding: 0 6px 0 1px;
  background: #fff;
`
const EditorBody = styled.div`
  display: flex;
  flex: 1;
  min-height: 0;
`
const ListColumn = styled.section`
  display: flex;
  flex-direction: column;
  flex: 0 0 190px;
  padding: 5px 3px 3px 5px;
`
const SearchRow = styled.div`
  display: flex;
  height: 24px;
  margin-bottom: 2px;
  padding-left: 1px;
`
const SearchBox = styled.div`
  flex: 0 0 157px;
  padding: 0 2px;
  border: 1px solid #777;
  border-right-color: #ccc;
  border-bottom-color: #ccc;
  background: #fff;
  color: #8c8c8c;
  font-size: 12.500px;
`
const SearchBtn = styled.div`
  display: flex;
  align-items: center;
  justify-content: center;
  flex: 1;
`
const ListFrame = styled.div`
  display: flex;
  flex: 1;
  min-height: 0;
  border: 1px solid #888;
  border-top-color: #ddd;
  background: #fff;
`
const ListRows = styled.div`
  display: flex;
  flex-direction: column;
  flex: 1;
  padding-bottom: 16px;
`
const ListRow = styled.div`
  display: flex;
  align-items: center;
  gap: 3px;
  flex: none;
  height: 16px;
  padding-left: ${p => p.$in}px;
`
const RowName = styled.span`
  margin-left: 5px;
  font-family: "DejaVu Sans Mono", "Liberation Mono", "Noto Sans CJK SC", monospace;
  font-size: 10px;
`
const ListSpring = styled.div`
  flex: 1;
`
const RowDash = styled.i`
  flex: none;
  width: ${p => p.$w || 4}px;
  border-top: 1px dotted #555;
`
const ListScroll = styled.div`
  display: flex;
  flex-direction: column;
  align-items: center;
  justify-content: space-between;
  flex: 0 0 16px;
  margin-right: 1px;
  padding-bottom: 3px;
`
const ScrollTrack = styled.div`
  flex: none;
  width: 15px;
  height: ${p => p.$h}px;
  margin-top: ${p => p.$top || 0}px;
  background: #cdcdcd;
`
const PropertyPanel = styled.section`
  display: flex;
  flex-direction: column;
  flex: 1;
  min-width: 0;
  margin-bottom: 3px;
  background: #fff;
`
const TabStrip = styled.div`
  display: flex;
  flex: none;
  height: 23px;
  margin-top: 1px;
  padding-left: 2px;
  border-bottom: 1px solid #d0d0d0;
  background: #fff;
`
const Tab = styled.div`
  display: flex;
  align-items: center;
  justify-content: center;
  width: 60px;
  border-right: 1px solid #d0d0d0;
  border-left: 1px solid #d0d0d0;
  background: #fff;
`
const PropTable = styled.div`
  flex: 1;
  margin: 2px 5px 1px 5px;
  border: 1px solid #aaa;
`
const PropHead = styled.div`
  display: flex;
  height: 24px;
`
const PropCell = styled.div`
  display: flex;
  align-items: center;
  justify-content: center;
  flex: 0 0 ${p => p.$w}px;
  border-right: 1px solid #c8c8c8;
  border-bottom: 1px solid #c8c8c8;
  background: ${p => (p.$on ? 'linear-gradient(#f9e3b8, #ecc27a)' : '#fff')};
  color: ${p => (p.$on ? '#5a1a6a' : '#222')};
`
const StatusBar = styled.footer`
  display: flex;
  gap: 2px;
  flex: none;
  height: 21px;
  padding: 1px 0;
`
const StatusCell = styled.div`
  display: flex;
  align-items: center;
  flex: ${p => (p.$grow ? '1' : `0 0 ${p.$w}px`)};
  padding-left: 1px;
  border: 1px solid #dcdcdc;
`
const Mono = styled.span`
  font-family: "DejaVu Sans Mono", "Liberation Mono", monospace;
  font-size: 10.500px;
`
const Taskbar = styled.div`
  display: flex;
  flex: none;
  height: 40px;
  background: #0c1a22;
  color: #fff;
`
const StartButton = styled.div`
  display: flex;
  align-items: center;
  justify-content: center;
  flex: 0 0 48px;
  background: #0a0a0a;
`
const TaskSearch = styled.div`
  display: flex;
  align-items: center;
  flex: 0 0 344px;
  padding: 0 12px;
  background: #f2f2f2;
  color: #444;
`
const Ring = styled.i`
  flex: none;
  width: 22px;
  height: 22px;
  border: 3px solid #111;
  border-radius: 50%;
`
const SearchHint = styled.span`
  flex: 1;
  margin-left: 6px;
  font-size: 12.800px;
`
const TaskIcons = styled.div`
  display: flex;
  flex: none;
  margin-left: 5px;
`
const TaskSlot = styled.div`
  position: relative;
  display: flex;
  align-items: center;
  justify-content: center;
  flex: 0 0 ${p => p.$w}px;
  background: ${p => (p.$active ? '#34434c' : 'transparent')};
  &::after {
    content: '';
    position: absolute;
    bottom: 0;
    left: ${p => (p.$active ? '0' : '5px')};
    right: ${p => (p.$active ? '0' : '5px')};
    height: 2px;
    background: ${p => (p.$on ? '#78b4e8' : 'transparent')};
  }
`
const BigE = styled.b`
  font: 700 30px/24px "Liberation Sans", sans-serif;
  color: ${p => p.$c};
`
const IeWrap = styled.span`
  display: grid;
  place-items: center;
  > * { grid-area: 1 / 1; }
`
const PdfMark = styled.b`
  display: flex;
  align-items: center;
  justify-content: center;
  width: 24px;
  height: 26px;
  border-radius: 3px;
  background: #b8651c;
  color: #f0d0a8;
  font: 700 8px ${SANS};
`
const Tray = styled.div`
  display: flex;
  align-items: center;
  flex: 1;
`
const TraySlot = styled.div`
  display: flex;
  align-items: center;
  flex: none;
  margin-left: ${p => p.$ml}px;
`
const TrayText = styled.span`
  font-size: 13px;
`
const SogouTray = styled.b`
  display: flex;
  align-items: center;
  justify-content: center;
  width: 15px;
  height: 18px;
  border-radius: 4px;
  background: #e8411e;
  font: 700 14px ${SANS};
`
const Clock = styled.div`
  display: flex;
  flex-direction: column;
  align-items: center;
  gap: 4px;
  width: 64px;
  font: 12px/14px ${SANS};
  white-space: nowrap;
`
const ConfigWindow = styled.div`
  position: absolute;
  left: 378px;
  top: 165px;
  display: flex;
  flex-direction: column;
  width: 966px;
  height: 537px;
  padding: 0 8px 8px 7px;
  border: 1px solid #555;
  background: #dce7f3;
`
const ConfigTitle = styled.div`
  flex: none;
  height: 30px;
  margin: 0 -8px 0 -7px;
  background: linear-gradient(#bccddd, #dbe6f2);
`
const ConfigClient = styled.div`
  display: flex;
  flex-direction: column;
  flex: 1;
  border-right: 1px solid #999;
  border-bottom: 1px solid #999;
  background: #f0f0f0;
`
const RadioRow = styled.div`
  display: flex;
  align-items: center;
  justify-content: center;
  gap: 4px;
  flex: none;
  height: 34px;
  padding-left: 206px;
  border-bottom: 1px solid #bbb;
  white-space: nowrap;
`
const Radio = styled.i`
  flex: none;
  width: 13px;
  height: 13px;
  border: 1px solid #444;
  border-radius: 50%;
  background: #fff;
`
const BlackPane = styled.div`
  flex: none;
  height: 420px;
  background: #000;
`
const ConfigFooter = styled.div`
  display: flex;
  justify-content: flex-end;
  align-items: flex-start;
  flex: 1;
  padding: 11px 25px 0 0;
`
const FocusButton = styled.div`
  display: flex;
  align-items: center;
  justify-content: center;
  width: 73px;
  height: 23px;
  border: 2px solid #0078d7;
  background: #e1e1e1;
`
const Dialog = styled.div`
  position: absolute;
  left: 47px;
  top: 150px;
  display: flex;
  flex-direction: column;
  width: 638px;
  height: 501px;
  border: 1px solid #3f8fdc;
  background: #f0f0f0;
  box-shadow: 4px 6px 18px rgba(0, 0, 0, 0.35);
`
const DialogTitle = styled.div`
  display: flex;
  align-items: center;
  flex: none;
  height: 30px;
  padding: 0 0 3px 9px;
  background: #fff;
`
const DialogName = styled.span`
  margin-left: 5px;
`
const DialogButtons = styled.div`
  display: flex;
  align-items: center;
  gap: 32px;
  margin-left: auto;
  padding-right: 15px;
`
const DialogBody = styled.div`
  display: flex;
  flex: none;
  height: 422px;
  overflow: hidden;
`
const ThumbGrid = styled.div`
  display: grid;
  grid-template-columns: 304px 304px;
  grid-template-rows: 111px 205px 205px;
  column-gap: 4px;
  row-gap: 5px;
  flex: 1;
  padding-left: 4px;
`
const Thumb = styled.div`
  overflow: hidden;
  background: #000;
  box-shadow: 1px 1px 0 #9a9a9a;
  ${p => p.$picked && 'outline: 4px solid #f00; outline-offset: -4px;'}
`
const DialogScroll = styled.div`
  display: flex;
  flex-direction: column;
  align-items: center;
  flex: 0 0 17px;
  margin-right: 1px;
  padding: 3px 0;
  background: #f0f0f0;
  > :last-child { margin-top: auto; }
`
const DialogFooter = styled.div`
  display: flex;
  justify-content: flex-end;
  gap: 15px;
  flex: 1;
  padding: 11px 35px 0 0;
  border-top: 1px solid #aaa;
`
const DialogButton = styled.div`
  display: flex;
  align-items: center;
  justify-content: center;
  width: 89px;
  height: 25px;
  border: ${p => (p.$primary ? '2px solid #0078d7' : '1px solid #adadad')};
  background: #e1e1e1;
`
const ScoreBadge = styled.div`
  position: absolute;
  left: 718px;
  top: -14px;
  display: flex;
  align-items: flex-end;
  justify-content: center;
  width: 47px;
  height: 23px;
  border-radius: 0 0 24px 24px;
  background: #4caf50;
  color: #fff;
  font: 700 9px/10px ${SANS};
`
const ImeBar = styled.div`
  position: absolute;
  left: 683px;
  top: 8px;
  display: flex;
  align-items: center;
  gap: 5px;
  width: 204px;
  height: 23px;
  border: 1px solid #a8c0d4;
  background: rgba(255, 255, 255, 0.92);
`
const ImeLogo = styled.b`
  display: flex;
  align-items: center;
  justify-content: center;
  flex: none;
  width: 24px;
  height: 24px;
  margin: -2px 3px 0 -1px;
  border-radius: 7px;
  background: #ee4d1d;
  color: #fff;
  font: 700 20px ${SANS};
`
const ImeWord = styled.b`
  width: ${p => (p.$s ? '14px' : '16px')};
  color: #1f86dc;
  font-size: ${p => p.$s || 15}px;
  line-height: 17px;
`
